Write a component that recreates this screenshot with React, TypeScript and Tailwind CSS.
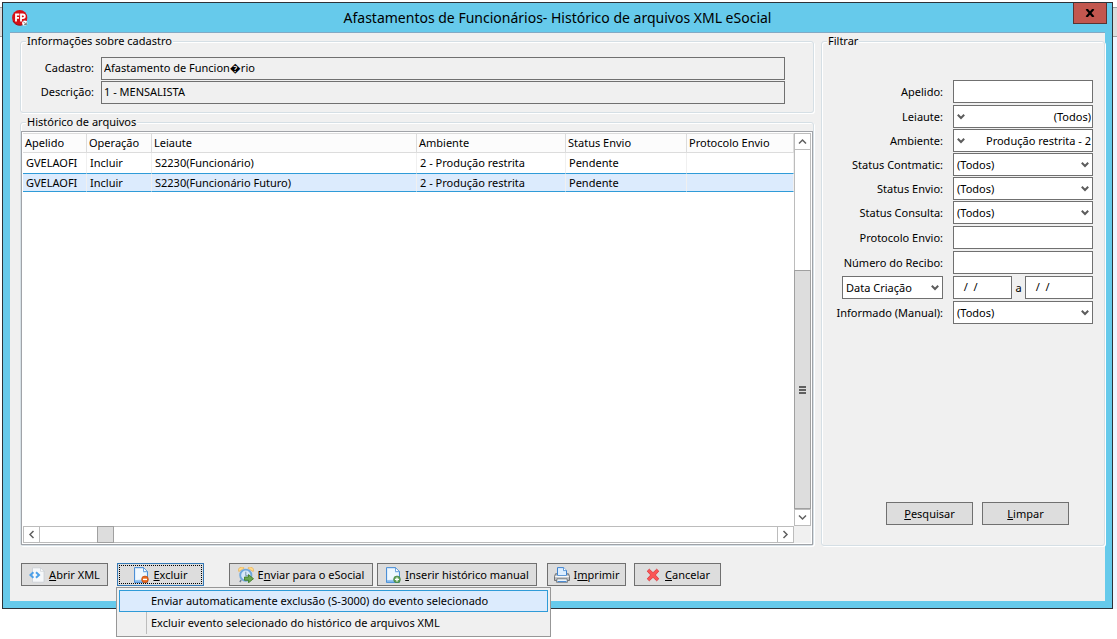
import React from "react";

const labelClass = "text-right whitespace-nowrap";
const boxClass =
  "h-[23px] min-w-0 border border-[#707070] bg-white px-1 pb-[2px] outline-none";
const readOnlyClass =
  "h-[23px] min-w-0 flex-1 border border-[#707070] bg-[#f0f0f0] px-[2px] pb-[2px] outline-none";
const buttonClass =
  "flex h-[23px] shrink-0 items-center justify-center border border-[#707070] bg-[#dddddd] whitespace-nowrap";
const groupClass =
  "min-w-0 rounded-[3px] border border-[#d5dfe5] shadow-[inset_1px_1px_0_#fff,1px_1px_0_#fff]";
const legendClass = "ml-[5px] bg-[#f0f0f0] px-px leading-4";

function Chevron({ className }: { className: string }) {
  return (
    <svg viewBox="0 0 8 6" className={className} aria-hidden="true">
      <path d="M0.8 0.8 L4 4 L7.2 0.8" fill="none" stroke="#5c5c5c" strokeWidth="2" />
    </svg>
  );
}

function Select({
  id,
  value,
  mirrored = false,
  label,
}: {
  id: string;
  value: string;
  mirrored?: boolean;
  label?: string;
}) {
  return (
    <div className="relative flex w-full">
      <select
        id={id}
        aria-label={label}
        className={
          mirrored
            ? "h-[23px] w-full appearance-none border border-[#707070] bg-white pr-px text-right outline-none [text-align-last:right]"
            : "h-[23px] w-full appearance-none border border-[#707070] bg-white pl-[3px] outline-none"
        }
      >
        <option>{value}</option>
      </select>
      <Chevron
        className={
          mirrored
            ? "pointer-events-none absolute top-[9px] left-1 h-[6px] w-2"
            : "pointer-events-none absolute top-[9px] right-1 h-[6px] w-2"
        }
      />
    </div>
  );
}

function Field({ id, label, children }: { id: string; label: string; children: React.ReactNode }) {
  return (
    <div className="flex items-center gap-[10px]">
      <label htmlFor={id} className={`${labelClass} flex-1`}>
        {label}
      </label>
      <div className="flex w-[140px]">{children}</div>
    </div>
  );
}

function AppIcon() {
  return (
    <svg viewBox="0 0 16 16" className="size-4" aria-hidden="true">
      <circle cx="7.7" cy="7.7" r="7.6" fill="#d50f16" />
      <path d="M1 11a7.5 7.5 0 0 0 11 3" stroke="#9c0810" fill="none" />
      <path d="M4 11.4V4.5h3.4M4 7.8h3M9 11.4V4.5h1.8q2 0 2 1.8t-2 1.8H9" fill="none" stroke="#fff" strokeWidth="1.8" />
      <circle cx="12.7" cy="13" r="2.6" fill="#fff" />
      <path d="M11.2 11.5l3 3M14.3 12.4v2.2h-2.2" stroke="#555" strokeWidth=".8" fill="none" />
    </svg>
  );
}

function XmlIcon() {
  return (
    <svg viewBox="0 0 16 16" className="size-4" aria-hidden="true">
      <path d="M3.5.8h8l3.5 3.5v10.9H3.5z" fill="#f6f8fa" stroke="#c9ced4" strokeWidth=".8" />
      <path d="M11.5.8v3.5H15z" fill="#fff" stroke="#c9ced4" strokeWidth=".7" />
      <path d="M4.4 5.2L1.4 8l3 2.8M7 5.2L10 8l-3 2.8" fill="none" stroke="#4b9fe8" strokeWidth="2" />
    </svg>
  );
}

function Page() {
  return (
    <>
      <path d="M1.5.6h9l4 4v10.9h-13z" fill="#dcedfc" stroke="#4b8fd6" />
      <path d="M3 2h7v4h3.2v4L3 13z" fill="#f4faff" opacity=".8" />
      <path d="M10.5.6v4h4z" fill="#fff" stroke="#4b8fd6" strokeWidth=".8" />
      <path d="M2 13.2h12v2H2z" fill="#83b9ee" />
    </>
  );
}

function DeleteIcon() {
  return (
    <svg viewBox="0 0 16 16" className="size-4" aria-hidden="true">
      <Page />
      <circle cx="12" cy="12.4" r="3.4" fill="#e8681c" stroke="#bb4309" strokeWidth=".6" />
      <path d="M10 12.4h4" stroke="#fff" strokeWidth="1.4" />
    </svg>
  );
}

function InsertIcon() {
  return (
    <svg viewBox="0 0 16 16" className="size-4" aria-hidden="true">
      <Page />
      <circle cx="12" cy="12.4" r="3.4" fill="#62a35a" stroke="#3c7838" strokeWidth=".6" />
      <path d="M10 12.4h4M12 10.4v4" stroke="#fff" strokeWidth="1.3" />
    </svg>
  );
}

function ClockIcon() {
  return (
    <svg viewBox="0 0 16 16" className="size-4" aria-hidden="true">
      <path d="M.8 4.6a3.2 3.2 0 0 1 5.4-3.4z M15.2 4.6a3.2 3.2 0 0 0-5.4-3.4z" fill="#ffd98a" stroke="#e0a848" strokeWidth=".6" />
      <path d="M3.2 13l-1.4 2" stroke="#6e7f90" strokeWidth="1.4" />
      <circle cx="7.8" cy="8.2" r="5.6" fill="#d6e8f8" stroke="#6fa8dc" strokeWidth="1.9" />
      <path d="M7.8 4.7v4h3" fill="none" stroke="#7795ad" />
      <path d="M6.5 10h4V7.6l5 4.1-5 4.1v-2.5h-4z" fill="#6aa84f" stroke="#38761d" strokeWidth=".8" />
    </svg>
  );
}

function PrinterIcon() {
  return (
    <svg viewBox="0 0 16 16" className="size-4" aria-hidden="true">
      <path d="M1.5 6.8h13l1 2.7v4H.5v-4z" fill="#b9bbbd" stroke="#66696c" strokeWidth=".9" />
      <path d="M3.5 8.5V.6h6.2l2.8 2.8v5.1z" fill="#dceeff" stroke="#3e83cf" />
      <path d="M9.5.6v3h3" fill="#fff" stroke="#3e83cf" strokeWidth=".8" />
      <path d="M1.2 9.5h13.6" stroke="#f8f8f8" strokeWidth="1.4" />
      <path d="M3 11.8h10l.5 3.5h-11z" fill="#eef6fd" stroke="#66696c" strokeWidth=".8" />
      <path d="M3.5 14.6h9" stroke="#3e83cf" />
    </svg>
  );
}

function CancelIcon() {
  return (
    <svg viewBox="0 0 16 16" className="size-4" aria-hidden="true">
      <path
        d="M2.2 4.2L4.3 2.2 8 5.7l3.7-3.5 2.1 2L10.3 8l3.5 3.8-2.1 2L8 10.3l-3.7 3.5-2.1-2L5.7 8z"
        fill="#fb5555"
        stroke="#dd3b41"
        strokeWidth=".9"
      />
    </svg>
  );
}

function ScrollArrow({ label, d }: { label: string; d: string }) {
  return (
    <button
      type="button"
      aria-label={label}
      className="flex size-[17px] shrink-0 items-center justify-center border border-[#bcbcbc] bg-white"
    >
      <svg viewBox="0 0 9 9" className="size-[9px]" aria-hidden="true">
        <path d={d} fill="none" stroke="#606060" strokeWidth="1.5" />
      </svg>
    </button>
  );
}

const columns = [
  { title: "Apelido", width: "w-[64px]" },
  { title: "Operação", width: "w-[65px]" },
  { title: "Leiaute", width: "w-[265px]" },
  { title: "Ambiente", width: "w-[149px]" },
  { title: "Status Envio", width: "w-[121px]" },
  { title: "Protocolo Envio", width: "" },
];

const rows = [
  ["GVELAOFI", "Incluir", "S2230(Funcionário)", "2 - Produção restrita", "Pendente", ""],
  ["GVELAOFI", "Incluir", "S2230(Funcionário Futuro)", "2 - Produção restrita", "Pendente", ""],
];

function HistoryTable() {
  return (
    <div className="flex flex-1 flex-col border border-[#a0a3a8] bg-white p-px">
      <div className="flex flex-1">
        <div className="min-w-0 flex-1 overflow-hidden">
          <table className="w-full table-fixed border-separate border-spacing-0 text-left">
            <thead>
              <tr>
                {columns.map((c) => (
                  <th
                    key={c.title}
                    className={`${c.width} h-5 border-t border-r border-b border-[#dcdcdc] bg-[#fcfcfc] pl-[2px] font-normal leading-4 whitespace-nowrap`}
                  >
                    {c.title}
                  </th>
                ))}
              </tr>
            </thead>
            <tbody>
              {rows.map((row, r) => (
                <tr key={r}>
                  {row.map((cell, c) => (
                    <td
                      key={c}
                      className={
                        r === 1
                          ? "h-[19px] border-y border-y-[#2f9bd8] border-r border-r-[#f0f0f0] bg-[#dcebfd] pl-[3px] leading-4 whitespace-nowrap"
                          : "h-5 border-r border-[#f0f0f0] bg-white pl-[3px] leading-4 whitespace-nowrap"
                      }
                    >
                      {cell}
                    </td>
                  ))}
                </tr>
              ))}
            </tbody>
          </table>
        </div>
        <div className="flex w-[17px] flex-col">
          <ScrollArrow label="Rolar para cima" d="M1 6.5L4.5 3L8 6.5" />
          <div className="flex-1 border-x border-[#bcbcbc]" />
          <div className="flex h-[239px] flex-col items-center justify-center gap-px border border-[#a0a0a0] bg-[#dddddd]">
            <div className="h-[2px] w-[7px] bg-[#606060]" />
            <div className="h-[2px] w-[7px] bg-[#606060]" />
            <div className="h-[2px] w-[7px] bg-[#606060]" />
          </div>
          <ScrollArrow label="Rolar para baixo" d="M1 2.5L4.5 6L8 2.5" />
        </div>
      </div>
      <div className="flex bg-[#f0f0f0]">
        <div className="flex flex-1 bg-white">
          <ScrollArrow label="Rolar para a esquerda" d="M6.5 1L3 4.5L6.5 8" />
          <div className="w-[57px] border-y border-[#bcbcbc]" />
          <div className="h-[17px] w-[17px] border border-[#a0a0a0] bg-[#dddddd]" />
          <div className="flex-1 border-y border-[#bcbcbc]" />
          <ScrollArrow label="Rolar para a direita" d="M2.5 1L6 4.5L2.5 8" />
        </div>
        <div className="w-[17px]" />
      </div>
    </div>
  );
}

function RecordInfo() {
  return (
    <fieldset className={`${groupClass} pb-2`}>
      <legend className={legendClass}>Informações sobre cadastro</legend>
      <div className="flex flex-col gap-px pt-2 pr-[28px]">
        <div className="flex items-center gap-[7px]">
          <label htmlFor="cadastro" className={`${labelClass} w-[73px] pb-[2px]`}>
            Cadastro:
          </label>
          <input
            id="cadastro"
            readOnly
            defaultValue={"Afastamento de Funcion\uFFFDrio"}
            className={readOnlyClass}
          />
        </div>
        <div className="flex items-center gap-[7px]">
          <label htmlFor="descricao" className={`${labelClass} w-[73px] pb-[2px]`}>
            Descrição:
          </label>
          <input id="descricao" readOnly defaultValue="1 - MENSALISTA" className={readOnlyClass} />
        </div>
      </div>
    </fieldset>
  );
}

function Filters() {
  return (
    <fieldset className={`${groupClass} w-[284px] shrink-0`}>
      <legend className={legendClass}>Filtrar</legend>
      <div className="flex h-full flex-col pt-[31px] pr-[11px] pb-5">
        <div className="flex flex-col gap-[2px]">
          <Field id="apelido" label="Apelido:">
            <input id="apelido" className={`${boxClass} w-full`} />
          </Field>
          <div className="flex flex-col gap-px">
            <Field id="leiaute" label="Leiaute:">
              <Select id="leiaute" value="(Todos)" mirrored />
            </Field>
            <Field id="ambiente" label="Ambiente:">
              <Select id="ambiente" value="Produção restrita - 2" mirrored />
            </Field>
            <Field id="contmatic" label="Status Contmatic:">
              <Select id="contmatic" value="(Todos)" />
            </Field>
            <Field id="envio" label="Status Envio:">
              <Select id="envio" value="(Todos)" />
            </Field>
            <Field id="consulta" label="Status Consulta:">
              <Select id="consulta" value="(Todos)" />
            </Field>
          </div>
          <Field id="protocolo" label="Protocolo Envio:">
            <input id="protocolo" className={`${boxClass} w-full`} />
          </Field>
          <Field id="recibo" label="Número do Recibo:">
            <input id="recibo" className={`${boxClass} w-full`} />
          </Field>
          <div className="flex items-center justify-end gap-[10px]">
            <div className="w-[101px]">
              <Select id="data" label="Tipo de data" value="Data Criação" />
            </div>
            <div className="flex w-[140px] items-center">
              <input aria-label="Data inicial" defaultValue="  /  /" className={`${boxClass} w-[59px]`} />
              <span className="w-[13px] text-center">a</span>
              <input aria-label="Data final" defaultValue="  /  /" className={`${boxClass} w-[68px]`} />
            </div>
          </div>
          <Field id="informado" label="Informado (Manual):">
            <Select id="informado" value="(Todos)" />
          </Field>
        </div>
        <div className="mt-auto flex justify-end gap-[9px] pr-6">
          <button type="button" className={`${buttonClass} w-[87px]`}>
            <span><u>P</u>esquisar</span>
          </button>
          <button type="button" className={`${buttonClass} w-[87px]`}>
            <span><u>L</u>impar</span>
          </button>
        </div>
      </div>
    </fieldset>
  );
}

function Toolbar() {
  return (
    <div className="flex pt-[17px] pb-[15px] pl-[11px]">
      <button type="button" className={`${buttonClass} w-[87px] gap-1`}>
        <XmlIcon />
        <span><u>A</u>brir XML</span>
      </button>
      <div className="relative ml-[9px]">
        <button
          type="button"
          aria-haspopup="menu"
          className="flex h-[23px] w-[87px] border border-[#3579b5] bg-[#dddddd] p-px"
        >
          <span className="flex h-full w-full items-center justify-center gap-1 border border-dotted border-black">
            <DeleteIcon />
            <span><u>E</u>xcluir</span>
          </span>
        </button>
        <div
          role="menu"
          className="absolute top-6 -left-px z-10 w-[435px] border border-[#979797] bg-[#f0f0f0] p-[2px]"
        >
          <button
            type="button"
            role="menuitem"
            className="flex h-[22px] w-full items-center border border-[#2f9bd8] bg-[#dcebfd] pl-[31px] text-left"
          >
            Enviar automaticamente exclusão (S-3000) do evento selecionado
          </button>
          <div className="flex pl-[27px]">
            <button
              type="button"
              role="menuitem"
              className="flex h-[22px] w-full items-center border-l border-[#bdbdbd] pl-1 text-left"
            >
              Excluir evento selecionado do histórico de arquivos XML
            </button>
          </div>
        </div>
      </div>
      <button type="button" className={`${buttonClass} ml-[25px] w-[144px] gap-1`}>
        <ClockIcon />
        <span>E<u>n</u>viar para o eSocial</span>
      </button>
      <button type="button" className={`${buttonClass} ml-1 w-[160px] gap-1`}>
        <InsertIcon />
        <span><u>I</u>nserir histórico manual</span>
      </button>
      <button type="button" className={`${buttonClass} ml-[10px] w-[79px] gap-1`}>
        <PrinterIcon />
        <span>I<u>m</u>primir</span>
      </button>
      <button type="button" className={`${buttonClass} ml-2 w-[87px] gap-1`}>
        <CancelIcon />
        <span><u>C</u>ancelar</span>
      </button>
    </div>
  );
}

export default function App() {
  return (
    <div className="flex min-h-screen bg-white pb-[30px] font-['Noto_Sans',sans-serif] text-[11px] leading-4 text-black">
      <div className="flex w-[2px] flex-col pt-[7px]">
        <div className="h-[30px] border-y border-[#a0a0a0] bg-[#dddddd]" />
      </div>
      <div className="mt-[2px] flex min-w-0 flex-1 flex-col border border-[#2d3238] bg-[#66caeb] pb-[7px]">
        <header className="flex h-[29px] items-center pr-[5px] pl-[9px]">
          <div className="flex w-[62px]">
            <AppIcon />
          </div>
          <h1 className="flex-1 text-center text-[14px] leading-5">
            Afastamentos de Funcionários- Histórico de arquivos XML eSocial
          </h1>
          <div className="flex w-[66px] justify-end self-start">
            <button
              type="button"
              aria-label="Fechar"
              className="flex h-[21px] w-[34px] items-center justify-center border border-t-0 border-[#5a3432] bg-[#c2574f]"
            >
              <svg viewBox="0 0 10 8" className="h-2 w-[10px]" aria-hidden="true">
                <path d="M1.5 0L8.5 8M8.5 0L1.5 8" stroke="#000" strokeWidth="2.2" />
              </svg>
            </button>
          </div>
        </header>
        <main className="mx-[7px] flex flex-1 flex-col border-t border-[#83a9c4] bg-[#f0f0f0]">
          <div className="flex flex-1 gap-[7px] pl-[10px]">
            <div className="flex min-w-0 flex-1 flex-col gap-px">
              <RecordInfo />
              <fieldset className={`${groupClass} flex flex-1 flex-col pt-px`}>
                <legend className={legendClass}>Histórico de arquivos</legend>
                <HistoryTable />
              </fieldset>
            </div>
            <Filters />
          </div>
          <Toolbar />
        </main>
      </div>
      <div className="flex w-[4px] flex-col pt-[7px]">
        <div className="h-[30px] border-y border-[#a0a0a0] bg-[#dddddd]" />
        <div className="flex-1 bg-[#f0f5ff]" />
      </div>
    </div>
  );
}
